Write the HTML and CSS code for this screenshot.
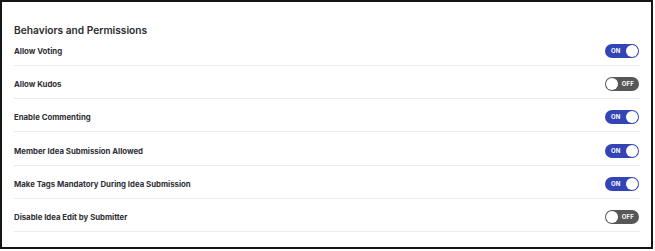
FILE: index.html
```html
<!DOCTYPE html>
<html>
<head>
<meta charset="utf-8">
<link rel="stylesheet" href="styles.css">
</head>
<body>
<div class="frame">
  <h2 class="title">Behaviors and Permissions</h2>
  <div class="list">
    <div class="row"><span class="label">Allow Voting</span><span class="toggle on"><span class="txt">ON</span><span class="knob"></span></span></div>
    <div class="row"><span class="label">Allow Kudos</span><span class="toggle off"><span class="knob"></span><span class="txt">OFF</span></span></div>
    <div class="row"><span class="label">Enable Commenting</span><span class="toggle on"><span class="txt">ON</span><span class="knob"></span></span></div>
    <div class="row"><span class="label">Member Idea Submission Allowed</span><span class="toggle on"><span class="txt">ON</span><span class="knob"></span></span></div>
    <div class="row"><span class="label">Make Tags Mandatory During Idea Submission</span><span class="toggle on"><span class="txt">ON</span><span class="knob"></span></span></div>
    <div class="row"><span class="label">Disable Idea Edit by Submitter</span><span class="toggle off"><span class="knob"></span><span class="txt">OFF</span></span></div>
  </div>
</div>
</body>
</html>
```
FILE: styles.css
```css
html, body { margin: 0; padding: 0; background: #fff; }
body { font-family: Inter, "Noto Sans", sans-serif; color: #2e2e33; }
.frame {
  width: 653px;
  height: 249px;
  box-sizing: border-box;
  border: 2px solid #151515;
  padding: 21px 11px 0 12px;
}
.title {
  margin: 0;
  font-size: 10.2px;
  line-height: 14px;
  font-weight: 600;
  color: #2b2b30;
}
.list { display: flex; flex-direction: column; }
.row {
  display: flex;
  align-items: center;
  justify-content: space-between;
  padding: 11px 0 7px 0;
  border-bottom: 1px solid #ececec;
}
.row:first-child { padding-top: 7px; }
.row:nth-child(4) { padding-top: 12px; }
.label {
  font-size: 7.8px;
  line-height: 14px;
  font-weight: 700;
  color: #2e2e33;
}
.toggle {
  display: flex;
  align-items: center;
  justify-content: space-between;
  width: 34px;
  height: 14px;
  box-sizing: border-box;
  border-radius: 7px;
  padding: 0 1px;
  margin-right: 1px;
}
.toggle.on { background: #3345b5; padding-left: 6px; }
.toggle.off { background: #575757; padding-right: 5px; }
.knob {
  width: 12px;
  height: 12px;
  box-sizing: border-box;
  border-radius: 50%;
  background: #fff;
}
.txt {
  color: #fff;
  font-size: 6px;
  font-weight: 700;
  letter-spacing: 0.2px;
  line-height: 14px;
}
```
